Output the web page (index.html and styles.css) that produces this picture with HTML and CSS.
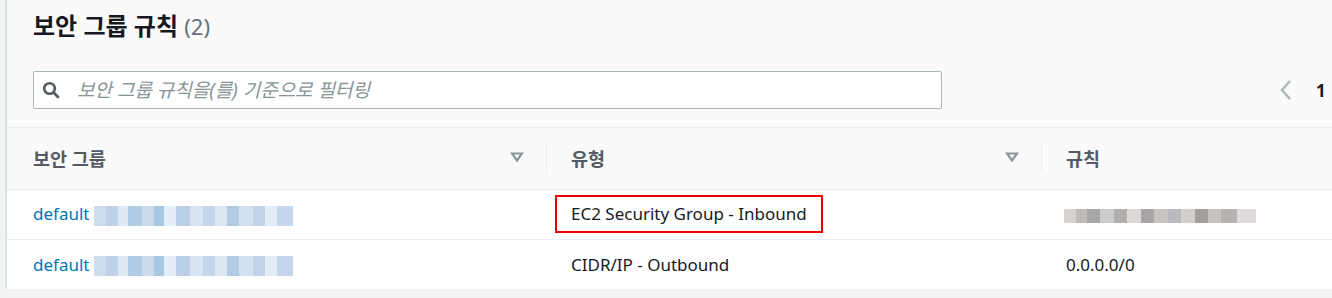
FILE: index.html
```html
<!DOCTYPE html>
<html lang="ko">
<head>
    <meta charset="UTF-8">
    <meta name="viewport" content="width=device-width, initial-scale=1.0">
    <title>보안 그룹 규칙</title>
    <link rel="stylesheet" href="styles.css">
</head>
<body>
    <div class="panel">
        <div class="panel-head">
            <h2 class="panel-title">보안 그룹 규칙 <span class="counter">(2)</span></h2>
            <div class="tools">
                <label class="search">
                    <svg class="search-icon" width="18" height="18" viewBox="0 0 18 18">
                        <circle cx="7.5" cy="7.5" r="5.3" fill="none" stroke="#545b64" stroke-width="2.6"/>
                        <line x1="11.3" y1="11.3" x2="16" y2="16" stroke="#545b64" stroke-width="2.8" stroke-linecap="round"/>
                    </svg>
                    <input type="text" placeholder="보안 그룹 규칙을(를) 기준으로 필터링">
                </label>
                <div class="pager">
                    <svg width="14" height="22" viewBox="0 0 14 22">
                        <polyline points="11,2 3,11 11,20" fill="none" stroke="#aab7b8" stroke-width="2.4"/>
                    </svg>
                    <span class="page-num">1</span>
                </div>
            </div>
        </div>

        <table class="rules">
            <thead>
                <tr>
                    <th class="col-group">보안 그룹 <svg class="sort" width="14" height="10" viewBox="0 0 14 10"><polygon points="2,1.5 12,1.5 7,8.5" fill="none" stroke="#879596" stroke-width="2.2" stroke-linejoin="miter"/></svg></th>
                    <th class="col-type">유형 <svg class="sort" width="14" height="10" viewBox="0 0 14 10"><polygon points="2,1.5 12,1.5 7,8.5" fill="none" stroke="#879596" stroke-width="2.2" stroke-linejoin="miter"/></svg></th>
                    <th class="col-rule">규칙</th>
                </tr>
            </thead>
            <tbody>
                <tr>
                    <td><a href="#">default</a> <span class="blur blur-blue"></span></td>
                    <td><span class="mark">EC2 Security Group - Inbound</span></td>
                    <td><span class="blur blur-gray"></span></td>
                </tr>
                <tr>
                    <td><a href="#">default</a> <span class="blur blur-blue"></span></td>
                    <td>CIDR/IP - Outbound</td>
                    <td>0.0.0.0/0</td>
                </tr>
            </tbody>
        </table>
    </div>
</body>
</html>
```

FILE: styles.css
```css
html, body {
    overflow: hidden;
}
body {
    margin: 0;
    padding-left: 6px;
    background-color: #f2f3f3;
    font-family: "Noto Sans", "Noto Sans CJK KR", sans-serif;
    color: #16191f;
}
.panel {
    width: 1400px;
    height: 289px;
    background-color: #fff;
    border-left: 1px solid #d5dbdb;
    box-shadow: 0 1px 1px rgba(0, 22, 44, 0.3);
}
.panel-head {
    background-color: #fafafa;
    height: 128px;
    padding-left: 26px;
    border-bottom: 1px solid #eaeded;
    box-sizing: border-box;
}
.panel-title {
    margin: 0;
    padding-top: 9px;
    font-size: 24px;
    line-height: 34px;
    font-weight: bold;
}
.counter {
    font-weight: normal;
    color: #687078;
    font-size: 22px;
}
.tools {
    display: flex;
    align-items: center;
    margin-top: 28px;
}
.search {
    display: flex;
    align-items: center;
    width: 909px;
    height: 38px;
    box-sizing: border-box;
    border: 1px solid #aab7b8;
    border-radius: 2px;
    background-color: #fff;
}
.search-icon {
    margin-left: 8px;
}
.search input {
    border: none;
    outline: none;
    flex: 1;
    margin-left: 17px;
    padding: 0;
    font-family: inherit;
    font-size: 19px;
    background: transparent;
}
.search input::placeholder {
    color: #879596;
    font-style: italic;
}
.pager {
    display: flex;
    align-items: center;
    gap: 23px;
    margin-left: 337px;
}
.page-num {
    font-weight: bold;
    font-size: 17px;
}
.rules {
    border-collapse: collapse;
    table-layout: fixed;
    width: 1400px;
}
.rules th,
.rules td {
    box-sizing: border-box;
}
.rules th {
    position: relative;
    height: 61px;
    padding: 0 0 0 26px;
    text-align: left;
    font-size: 18.5px;
    font-weight: bold;
    color: #545b64;
    background-color: #fafafa;
    border-bottom: 1px solid #eaeded;
}
.rules th + th {
    padding-left: 25px;
}
.rules th + th::before {
    content: "";
    position: absolute;
    left: 0;
    top: 15px;
    height: 30px;
    border-left: 1px solid #eaeded;
}
.col-group {
    width: 539px;
}
.col-type {
    width: 495px;
}
.sort {
    position: absolute;
    right: 22px;
    top: 24px;
}
.rules td {
    height: 50px;
    padding: 0 0 0 26px;
    font-size: 17px;
    border-bottom: 1px solid #eaeded;
    white-space: nowrap;
}
.rules tbody tr:last-child td {
    border-bottom: none;
}
.rules td + td {
    padding-left: 25px;
}
.rules a {
    color: #0073bb;
    text-decoration: none;
}
.blur {
    display: inline-block;
    vertical-align: middle;
}
.blur-blue {
    width: 199px;
    height: 20px;
    background: linear-gradient(90deg, #c9d9ec 0 6%, #b6cde6 6% 12%, #dbe5f1 12% 17%, #a9c6e3 17% 24%, #c4d7ec 24% 30%, #9fc1e0 30% 35%, #e2ebf5 35% 41%, #b3cbe5 41% 48%, #d4e1f0 48% 55%, #bcd1e8 55% 61%, #d9e4f1 61% 67%, #aac6e2 67% 73%, #cddcee 73% 80%, #b8cee7 80% 86%, #e0e9f4 86% 92%, #bcd1e8 92% 100%);
    opacity: 0.9;
}
.blur-gray {
    width: 192px;
    height: 14px;
    margin-left: -2px;
    background: linear-gradient(90deg, #d6d3d0 0 6%, #bfbcbc 6% 12%, #a9a6a8 12% 19%, #cfcccc 19% 26%, #b1aeb1 26% 33%, #dcd8d5 33% 40%, #a8a5a9 40% 47%, #c9c4c0 47% 54%, #b9b8bc 54% 61%, #d2cfcd 61% 68%, #a3a0a4 68% 75%, #c7c2be 75% 82%, #b5b2b4 82% 90%, #dedbda 90% 100%);
}
.mark {
    display: inline-block;
    margin-left: -16px;
    padding: 5px 14px 6px 14px;
    border: 2px solid #ee0000;
}
```
